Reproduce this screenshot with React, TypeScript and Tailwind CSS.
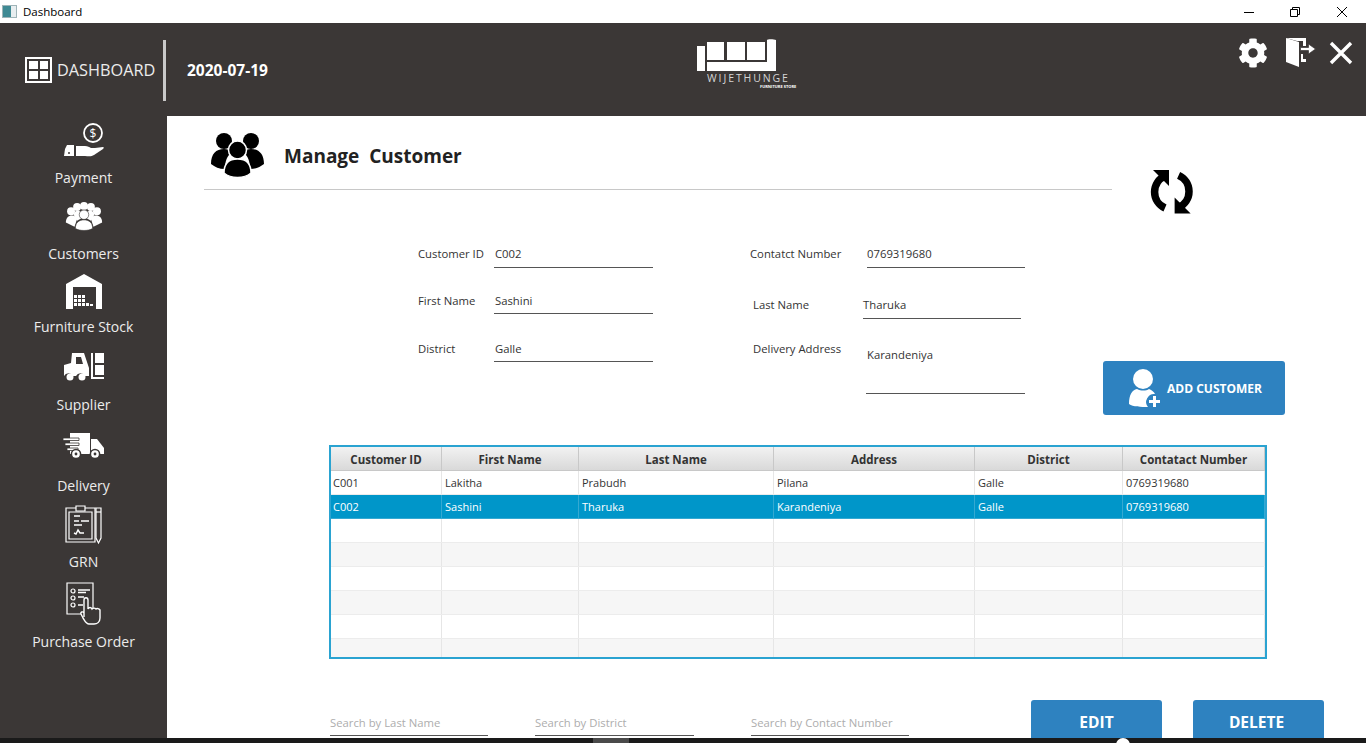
import { FaCog } from "react-icons/fa";

const columns = [
  { title: "Customer ID", width: "w-[111px]" },
  { title: "First Name", width: "w-[137px]" },
  { title: "Last Name", width: "w-[195px]" },
  { title: "Address", width: "w-[201px]" },
  { title: "District", width: "w-[148px]" },
  { title: "Contatact Number", width: "w-[142px]" },
];

const customers = [
  ["C001", "Lakitha", "Prabudh", "Pilana", "Galle", "0769319680"],
  ["C002", "Sashini", "Tharuka", "Karandeniya", "Galle", "0769319680"],
];

const font = { fontFamily: "'Open Sans', 'Noto Sans', sans-serif" };

function PaymentIcon() {
  return (
    <svg width="40" height="38" viewBox="0 0 40 38" fill="none">
      <circle cx="29" cy="10" r="9" stroke="white" strokeWidth="1.8" />
      <text x="29" y="14.5" fontSize="12" fill="white" textAnchor="middle">$</text>
      <path d="M1 26l2-4h7v11H0z" fill="white" />
      <path d="M12 23h9c3 0 4 1 6 2h4l8-1c1 0 1 1 0 2l-9 6c-3 2-6 1-9 1h-9z" fill="white" />
      <circle cx="5" cy="30" r="1" fill="#3b3736" />
    </svg>
  );
}

function CustomersIcon() {
  const heads = [[7, 11], [14, 6], [22, 5], [30, 6], [37, 11]];
  return (
    <svg width="38" height="30" viewBox="0 0 44 33" fill="white">
      {heads.map(([x, y]) => (
        <circle key={x} cx={x} cy={y} r="4.6" />
      ))}
      <path d="M1 24c0-5 3-8 7-8s5 2 6 4l-3 9z" />
      <path d="M43 24c0-5-3-8-7-8s-5 2-6 4l3 9z" />
      <path d="M10 15c0-4 4-5 6-5l3 3v6l-5 3z" />
      <path d="M34 15c0-4-4-5-6-5l-3 3v6l5 3z" />
      <circle cx="22" cy="15" r="5.5" stroke="#3b3736" strokeWidth="0.7" />
      <path d="M12 31c0-7 4-10 10-10s10 3 10 10c-5 3-15 3-20 0z" stroke="#3b3736" strokeWidth="0.7" />
    </svg>
  );
}

function StockIcon() {
  return (
    <svg width="36" height="35" viewBox="0 0 36 35" fill="white">
      <path fillRule="evenodd" d="M0 10L18 0l18 10v25h-6V13H7v22H0z" />
      <path d="M8 21h3v3H8zM12 21h3v3h-3zM16 21h3v3h-3zM8 25h3v3H8zM12 25h3v3h-3zM16 25h3v3h-3zM8 29h3v3H8zM12 29h3v3h-3zM16 29h3v3h-3zM20 29h3v3h-3zM24 30h3v2h-3z" />
    </svg>
  );
}

function SupplierIcon() {
  return (
    <svg width="40" height="29" viewBox="0 0 40 29" fill="white">
      <path fillRule="evenodd" d="M8 1h12l5 15v8h-4a5 5 0 0 0-9 0h-3a5 5 0 0 0-9 0V13l7-2zm4 4v7h7l-2-7z" />
      <circle cx="6" cy="25" r="3.5" />
      <circle cx="18" cy="25" r="3.5" />
      <path d="M27 1h2v24h11v2H27z" />
      <path d="M31 1h9v10h-9zM31 13h9v10h-9z" />
    </svg>
  );
}

function DeliveryIcon() {
  return (
    <svg width="42" height="27" viewBox="0 0 42 27" fill="white">
      <path d="M7 0h20v21H7z" />
      <path d="M28 6h6l7 9v6h-13z" />
      <path d="M0 5h16v2.5H0zM2 10h14v2.5H2zM4 15h11v2.5H4z" stroke="#3b3736" strokeWidth="0.8" />
      <circle cx="13" cy="21" r="4.6" stroke="#3b3736" strokeWidth="1.5" />
      <circle cx="32" cy="21" r="4.6" stroke="#3b3736" strokeWidth="1.5" />
      <circle cx="13" cy="21" r="1.4" fill="#3b3736" />
      <circle cx="32" cy="21" r="1.4" fill="#3b3736" />
    </svg>
  );
}

function GrnIcon() {
  return (
    <svg width="37" height="40" viewBox="0 0 37 40" fill="none" stroke="white" strokeWidth="1.2">
      <path d="M1 3h29v34H1z" />
      <path d="M4 7h23v27H4z" />
      <path d="M11 1h9v5h-9z" fill="#3b3736" />
      <path d="M31 3h5v30l-2.5 5-2.5-5z" />
      <path d="M31 7h5" />
      <path d="M9 11h6M9 16h5M16 16h8M9 20h8M9 28l2 1 2-4 2 3h4" strokeWidth="1.4" />
    </svg>
  );
}

function OrderIcon() {
  return (
    <svg width="36" height="43" viewBox="0 0 36 43" fill="none" stroke="white" strokeWidth="1.2">
      <path d="M1 1h26v31H1z" />
      <circle cx="7" cy="9" r="2" />
      <circle cx="7" cy="16" r="2" />
      <circle cx="7" cy="23" r="2" />
      <path d="M12 8h12M12 10.5h8M12 15h6M12 23h5" strokeWidth="1.4" />
      <path
        d="M18 35V18c0-3 4-3 4 0v9c1-2 3-2 4 0 1-1 3-1 4 0 1-1 3-.5 4 1v8c0 4-3 6-6 6h-5c-3 0-4-3-6-6l-2-4c-1-2 2-3 3-1z"
        fill="#3b3736"
        strokeWidth="1.4"
      />
    </svg>
  );
}

const navItems = [
  { label: "Payment", icon: <PaymentIcon />, top: "mt-[7px]", box: "h-[37px]", gap: "mt-[8px]" },
  { label: "Customers", icon: <CustomersIcon />, top: "mt-[13px]", box: "h-[30px]", gap: "mt-[13px]" },
  { label: "Furniture Stock", icon: <StockIcon />, top: "mt-[10px]", box: "h-[37px]", gap: "mt-[6px]" },
  { label: "Supplier", icon: <SupplierIcon />, top: "mt-[15px]", box: "h-[29px]", gap: "mt-[14px]" },
  { label: "Delivery", icon: <DeliveryIcon />, top: "mt-[18px]", box: "h-[27px]", gap: "mt-[16px]" },
  { label: "GRN", icon: <GrnIcon />, top: "mt-[9px]", box: "h-[40px]", gap: "mt-[7px]" },
  { label: "Purchase Order", icon: <OrderIcon />, top: "mt-[10px]", box: "h-[43px]", gap: "mt-[7px]" },
];

function NavItem({ item }: { item: (typeof navItems)[number] }) {
  return (
    <div className={`flex flex-col items-center ${item.top}`}>
      <div className={`flex items-start justify-center ${item.box}`}>{item.icon}</div>
      <span className={`text-[14px] leading-[20px] text-[#ececec] ${item.gap}`}>{item.label}</span>
    </div>
  );
}

function Field({
  label,
  value,
  labelClass,
  boxClass,
}: {
  label: string;
  value: string;
  labelClass: string;
  boxClass: string;
}) {
  return (
    <div className="flex items-start">
      <span className={`text-[11.3px] leading-[22px] text-[#333333] ${labelClass}`}>{label}</span>
      <div className={`border-b border-[#555555] text-[11.3px] leading-[22px] text-[#333333] ${boxClass}`}>{value}</div>
    </div>
  );
}

function SearchBox({ text, className }: { text: string; className: string }) {
  return (
    <div className={`h-[23px] border-b border-[#555555] text-[11.3px] leading-[20px] text-[#adadad] ${className}`}>
      {text}
    </div>
  );
}

export default function App() {
  return (
    <div className="relative flex h-[743px] w-[1366px] flex-col overflow-hidden bg-white" style={font}>
      {/* title bar */}
      <div className="flex h-[23px] shrink-0 items-center bg-white">
        <div className="ml-[2px] flex h-[13px] w-[15px] border border-[#9fb4b8] bg-[#e8eef0]">
          <div className="h-full w-[8px] bg-[#3f8a94]" />
        </div>
        <span className="ml-[6px] text-[11.5px] text-black">Dashboard</span>
        <div className="ml-auto flex items-center">
          <svg width="12" height="12" viewBox="0 0 12 12" className="mr-[34px]" stroke="black" fill="none">
            <path d="M1 6.5h10" />
          </svg>
          <svg width="12" height="12" viewBox="0 0 12 12" className="mr-[35px]" stroke="black" fill="none">
            <path d="M1.5 3.5h7v7h-7zM3.5 3.5v-2h7v7h-2" />
          </svg>
          <svg width="12" height="12" viewBox="0 0 12 12" className="mr-[18px]" stroke="black" fill="none">
            <path d="M1 1l10 10M11 1L1 11" />
          </svg>
        </div>
      </div>

      {/* top header */}
      <div className="flex h-[93px] shrink-0 items-start bg-[#3b3736]">
        <div className="ml-[25px] mt-[34px] flex h-[26px] w-[27px] items-center justify-center bg-white">
          <div className="grid h-[22px] w-[23px] grid-cols-2 gap-[2px] bg-[#3b3736] p-[2px]">
            <div className="bg-white" />
            <div className="bg-white" />
            <div className="bg-white" />
            <div className="bg-white" />
          </div>
        </div>
        <span className="ml-[5px] mt-[35px] w-[98px] whitespace-nowrap text-[16.3px] leading-[25px] text-[#ececec]">DASHBOARD</span>
        <div className="ml-[8px] mt-[17px] h-[61px] w-[3px] bg-[#c9c9c9]" />
        <span className="ml-[21px] mt-[37px] w-[81px] text-[15.5px] font-bold leading-[20px] text-white">2020-07-19</span>
        <div className="ml-[428px] mt-[15px] flex w-[100px] flex-col">
          <svg width="82" height="35" viewBox="0 0 82 35" fill="white">
            <path d="M1 8h8v25H1z" />
            <path d="M11 4h17v18H11zM31 4h18v18H31zM51 4h18v18H51z" />
            <path d="M11 24h60V2c0-1 7-1 9 0v31H11z" />
          </svg>
          <span className="ml-[11px] text-[10.5px] leading-[11px] tracking-[1.9px] text-[#d5d5d5]">WIJETHUNGE</span>
          <span className="ml-[64px] whitespace-nowrap text-[4px] font-bold leading-[5px] text-white">FURNITURE STORE</span>
        </div>
        <div className="ml-auto mt-[15px] flex items-start">
          <FaCog className="h-[30px] w-[30px] text-white" />
          <svg width="30" height="30" viewBox="0 0 30 30" className="ml-[18px]" fill="white">
            <path d="M0 0h20v8h-3V3H11z" />
            <path d="M0 0l13 4v25L0 24z" />
            <path d="M15 16h2v5h3v3h-5z" />
            <path d="M14.5 9.5h8V6l7 5-7 5v-3.5h-8z" stroke="#3b3736" strokeWidth="0.7" />
          </svg>
          <svg width="24" height="24" viewBox="0 0 24 24" className="ml-[13px] mr-[13px] mt-[3px]" stroke="white" strokeWidth="3.4">
            <path d="M2 2l20 20M22 2L2 22" />
          </svg>
        </div>
      </div>

      <div className="flex min-h-0 flex-1">
        {/* sidebar */}
        <aside className="flex w-[167px] shrink-0 flex-col bg-[#3b3736]">
          {navItems.map((item) => (
            <NavItem key={item.label} item={item} />
          ))}
        </aside>

        {/* main */}
        <main className="min-w-0 flex-1">
          <div className="flex items-start">
            <div className="ml-[37px] flex h-[74px] w-[908px] items-start border-b border-[#c8c8c8]">
              <svg width="54" height="46" viewBox="0 0 54 46" className="ml-[7px] mt-[16px]" fill="black">
                <circle cx="13" cy="9" r="8" />
                <circle cx="40" cy="9" r="8" />
                <path d="M0 32c0-10 5-15 13-15 3 0 6 1 8 3-5 4-7 9-7 17-6 0-10-2-14-5z" />
                <path d="M53 32c0-10-5-15-13-15-3 0-6 1-8 3 5 4 7 9 7 17 6 0 10-2 14-5z" />
                <circle cx="26.5" cy="18" r="9" stroke="white" strokeWidth="1.5" />
                <path d="M13 41c0-10 5-14 13.5-14S40 31 40 41c-7 6-20 6-27 0z" stroke="white" strokeWidth="1.5" />
              </svg>
              <h1 className="ml-[19px] mt-[27px] text-[19px] font-bold leading-[26px] text-[#222222]">
                Manage&nbsp;&nbsp;Customer
              </h1>
            </div>
            <svg width="44" height="44" viewBox="0 0 44 44" className="ml-[38px] mt-[54px]" fill="none">
              <g>
                <path d="M15 6A17.5 17.5 0 0 0 15 38" stroke="black" strokeWidth="7.5" />
                <path d="M3 0H19V16z" fill="black" />
              </g>
              <g transform="rotate(180 21.8 21.7)">
                <path d="M15 6A17.5 17.5 0 0 0 15 38" stroke="black" strokeWidth="7.5" />
                <path d="M3 0H19V16z" fill="black" />
              </g>
            </svg>
          </div>

          {/* form */}
          <div className="ml-[251px] mt-[29px] flex items-start">
            <div className="flex flex-col">
              <Field label="Customer ID" value="C002" labelClass="w-[76px]" boxClass="h-[25px] w-[159px] pl-px" />
              <div className="h-[22px]" />
              <Field label="First Name" value="Sashini" labelClass="w-[76px]" boxClass="h-[24px] w-[159px] pl-px" />
              <div className="h-[24px]" />
              <Field label="District" value="Galle" labelClass="w-[76px]" boxClass="h-[24px] w-[159px] pl-px" />
            </div>
            <div className="ml-[97px] flex flex-col">
              <Field label="Contatct Number" value="0769319680" labelClass="w-[117px]" boxClass="h-[25px] w-[158px]" />
              <div className="h-[26px]" />
              <Field label="Last Name" value="Tharuka" labelClass="ml-[3px] w-[110px]" boxClass="h-[25px] w-[158px]" />
              <div className="h-[25px]" />
              <Field label="Delivery Address" value="Karandeniya" labelClass="-mt-[6px] ml-[3px] w-[113px]" boxClass="h-[50px] w-[159px] pl-px" />
            </div>
            <button className="ml-[78px] mt-[118px] flex h-[54px] w-[182px] items-center rounded-[3px] bg-[#2e82c0] text-[12px] font-bold text-white">
              <svg width="33" height="38" viewBox="0 0 33 38" className="ml-[26px]" fill="white">
                <ellipse cx="14" cy="10" rx="10" ry="10" />
                <path d="M0 35c0-9 3-14 8-15 4 2 9 2 12 0 3 1 5 3 6 5a8 8 0 0 0-7 13C12 38 4 38 0 35z" />
                <path d="M24 27h3v4h4v3h-4v4h-3v-4h-4v-3h4z" />
              </svg>
              <span className="ml-[5px] pt-[2px]">ADD CUSTOMER</span>
            </button>
          </div>

          {/* customers table */}
          <div className="ml-[162px] mt-[30px] h-[214px] w-[938px] overflow-hidden border-2 border-[#2aa3d1] bg-white">
            <div className="flex h-[24px] border-b border-[#c8c8c8] bg-gradient-to-b from-[#f2f2f2] to-[#d9d9d9]">
              {columns.map((col) => (
                <div
                  key={col.title}
                  className={`${col.width} border-r border-[#c8c8c8] text-center text-[11.5px] font-bold leading-[25px] text-[#333333]`}
                >
                  {col.title}
                </div>
              ))}
            </div>
            {Array.from({ length: 8 }).map((_, row) => {
              const selected = row === 1;
              const striped = row > 1 && row % 2 === 1;
              return (
                <div
                  key={row}
                  className={`flex h-[24px] border-b ${selected ? "border-[#35a9d2] bg-[#0096c9] text-white" : striped ? "border-[#ececec] bg-[#f6f6f6] text-[#333333]" : "border-[#ececec] bg-white text-[#333333]"}`}
                >
                  {columns.map((col, i) => (
                    <div
                      key={col.title}
                      className={`${col.width} border-r text-[11px] leading-[23px] ${i === 0 ? "pl-[2px]" : "pl-[3px]"} ${selected ? "border-[#35a9d2]" : "border-[#e6e6e6]"}`}
                    >
                      {customers[row]?.[i] ?? ""}
                    </div>
                  ))}
                </div>
              );
            })}
          </div>

          {/* search + actions */}
          <div className="ml-[163px] mt-[41px] flex items-start">
            <SearchBox text="Search by Last Name" className="mt-[13px] w-[158px]" />
            <SearchBox text="Search by District" className="ml-[47px] mt-[13px] w-[159px]" />
            <SearchBox text="Search by Contact Number" className="ml-[57px] mt-[13px] w-[158px]" />
            <button className="ml-[122px] h-[50px] w-[131px] rounded-[3px] bg-[#2e82c0] pb-[5px] text-[15.5px] font-bold text-white">EDIT</button>
            <button className="ml-[31px] h-[50px] w-[131px] rounded-[3px] bg-[#2e82c0] pb-[5px] pr-[4px] text-[15.5px] font-bold text-white">DELETE</button>
          </div>
        </main>
      </div>

      {/* taskbar sliver */}
      <div className="absolute bottom-0 left-0 h-[5px] w-full overflow-hidden bg-[#1a1a1a]">
        <div className="absolute left-[593px] top-0 h-[5px] w-[36px] bg-[#4a4a4a]" />
        <div className="absolute left-[1116px] top-0 h-[14px] w-[14px] rounded-full bg-white" />
      </div>
    </div>
  );
}
